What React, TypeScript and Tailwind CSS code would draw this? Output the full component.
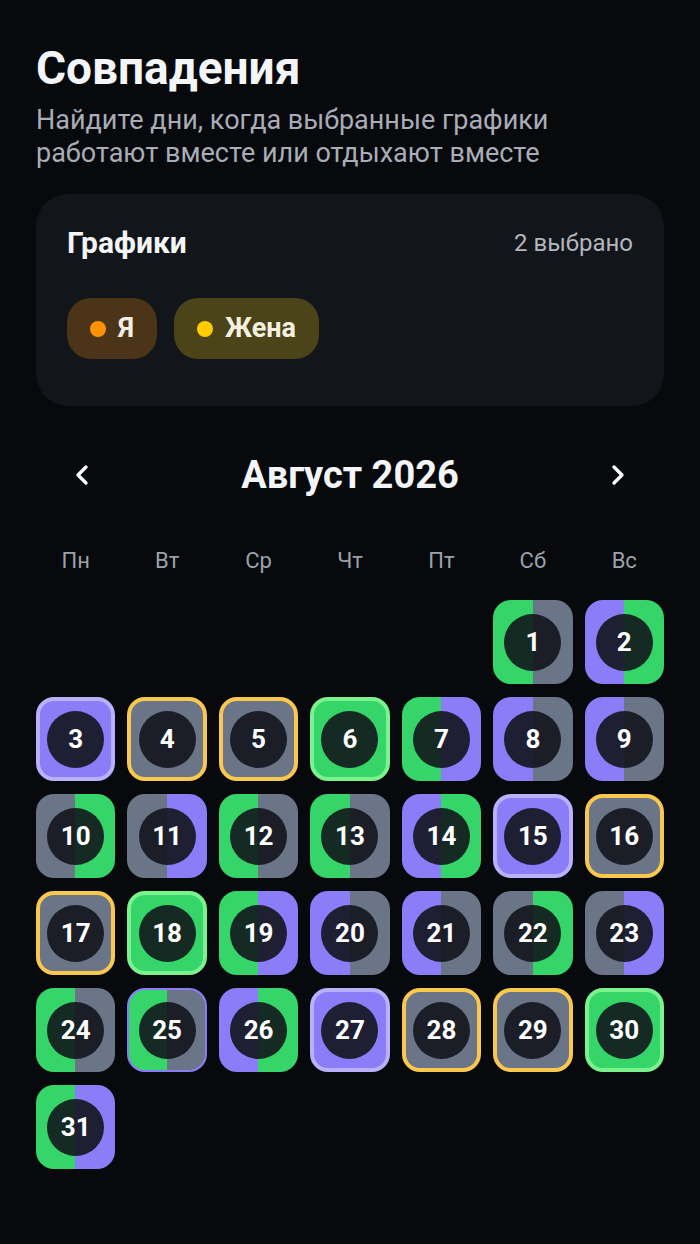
import React from 'react';
import { ChevronLeft, ChevronRight } from 'lucide-react';

type Kind =
  | 'gGr'
  | 'pG'
  | 'gP'
  | 'pGr'
  | 'grG'
  | 'grP'
  | 'pSolid'
  | 'gSolid'
  | 'yellow'
  | 'gGrP';

const kindClass: Record<Kind, string> = {
  gGr: 'bg-[linear-gradient(90deg,#35d56a_50%,#6b7588_50%)]',
  pG: 'bg-[linear-gradient(90deg,#8b7cf7_50%,#35d56a_50%)]',
  gP: 'bg-[linear-gradient(90deg,#35d56a_50%,#8b7cf7_50%)]',
  pGr: 'bg-[linear-gradient(90deg,#8b7cf7_50%,#6b7588_50%)]',
  grG: 'bg-[linear-gradient(90deg,#6b7588_50%,#35d56a_50%)]',
  grP: 'bg-[linear-gradient(90deg,#6b7588_50%,#8b7cf7_50%)]',
  pSolid: 'bg-[#8b7cf7] border-4 border-[#bbb0fd]',
  gSolid: 'bg-[#35d56a] border-4 border-[#7af28d]',
  yellow: 'bg-[#6b7588] border-4 border-[#fac84d]',
  gGrP: 'bg-[linear-gradient(90deg,#35d56a_50%,#6b7588_50%)] border-2 border-[#8b7cf7]',
};

const days: Kind[] = [
  'gGr', 'pG', 'pSolid', 'yellow', 'yellow', 'gSolid', 'gP',
  'pGr', 'pGr', 'grG', 'grP', 'gGr', 'gGr', 'pG',
  'pSolid', 'yellow', 'yellow', 'gSolid', 'gP', 'pGr', 'pGr',
  'grG', 'grP', 'gGr', 'gGrP', 'pG', 'pSolid', 'yellow',
  'yellow', 'gSolid', 'gP',
];

const weekdays = ['Пн', 'Вт', 'Ср', 'Чт', 'Пт', 'Сб', 'Вс'];

export default function App() {
  return (
    <div
      className="min-h-screen bg-[#07090d] px-9 pt-[42px] pb-10 text-white"
      style={{ fontFamily: 'Roboto, "Noto Sans", sans-serif' }}
    >
      <h1 className="text-[46px] leading-[52px] font-bold text-[#f4f5f7]">Совпадения</h1>
      <p className="mt-[10px] text-[27px] leading-[33px] text-[#a9adb5]">
        Найдите дни, когда выбранные графики
        <br />
        работают вместе или отдыхают вместе
      </p>

      <div className="mt-[24px] rounded-[32px] bg-[#121519] px-[31px] pt-[31px] pb-[47px]">
        <div className="flex items-center justify-between">
          <span className="text-[30px] leading-[32px] font-bold text-[#f4f5f7]">Графики</span>
          <span className="text-[24px] text-[#b2b6bd]">2 выбрано</span>
        </div>
        <div className="mt-[37px] flex gap-[17px]">
          <div className="flex h-[61px] items-center gap-[12px] rounded-[24px] bg-[#4b3417] px-[23px]">
            <span className="h-[16px] w-[16px] rounded-full bg-[#ff9400]" />
            <span className="text-[27px] font-bold text-[#f3ece2]">Я</span>
          </div>
          <div className="flex h-[61px] items-center gap-[12px] rounded-[24px] bg-[#4b4418] px-[23px]">
            <span className="h-[16px] w-[16px] rounded-full bg-[#ffcc00]" />
            <span className="text-[27px] font-bold text-[#f3f0e0]">Жена</span>
          </div>
        </div>
      </div>

      <div className="mt-[47px] flex items-center justify-between px-[30px]">
        <ChevronLeft size={32} strokeWidth={2.5} className="text-white" />
        <span className="text-[38px] leading-[44px] font-bold text-[#f4f5f7]">Август 2026</span>
        <ChevronRight size={32} strokeWidth={2.5} className="text-white" />
      </div>

      <div className="mt-[51px] grid grid-cols-7 gap-x-3">
        {weekdays.map((w) => (
          <div key={w} className="text-center text-[22px] leading-[26px] text-[#9ca1aa]">
            {w}
          </div>
        ))}
      </div>

      <div className="mt-[26px] grid grid-cols-7 gap-x-3 gap-y-[13px]">
        {[...Array(5)].map((_, i) => (
          <div key={`e${i}`} />
        ))}
        {days.map((k, i) => (
          <div
            key={i}
            className={`flex h-[84px] items-center justify-center rounded-[18px] ${kindClass[k]}`}
          >
            <div className="flex h-[57px] w-[57px] items-center justify-center rounded-full bg-[rgba(16,18,25,0.88)]">
              <span className="text-[26px] font-bold text-white">{i + 1}</span>
            </div>
          </div>
        ))}
      </div>
    </div>
  );
}
